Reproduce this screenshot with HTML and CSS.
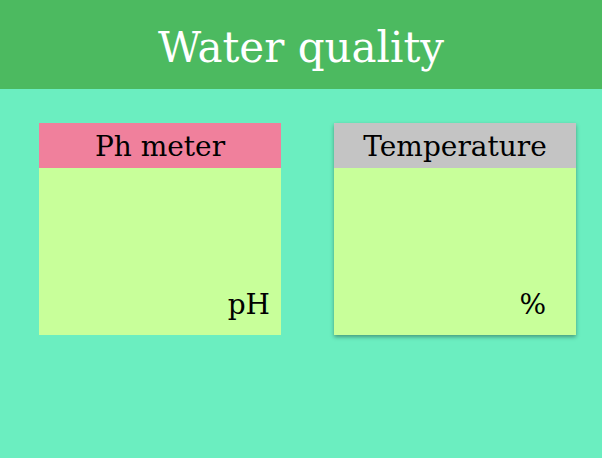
FILE: index.html
```html
<!DOCTYPE html>
<html lang="en">
<head>
    <meta charset="UTF-8">
    <title>Water quality</title>
    <link rel="stylesheet" href="styles.css">
</head>
<body>
<div class="header">Water quality</div>

<div class="panel">
    <div class="card">
        <div class="card-title ph">Ph meter</div>
        <div class="card-body">
            <span class="value"></span><span class="unit">pH</span>
        </div>
    </div>
    <div class="card raised">
        <div class="card-title temp">Temperature</div>
        <div class="card-body">
            <span class="value"></span><span class="unit unit-wide">%</span>
        </div>
    </div>
</div>
</body>
</html>
```

FILE: styles.css
```css
*{
    margin: 0;
    padding: 0;
    box-sizing: border-box;
}
body{
    width: 602px;
    height: 458px;
    background-color: #6beec0;
    font-family: "DejaVu Serif", serif;
    color: #000;
}
.header{
    height: 89px;
    padding-top: 24px;
    background-color: #4cba60;
    color: #fff;
    font-size: 42px;
    line-height: 48px;
    text-align: center;
}
.panel{
    display: flex;
    gap: 53px;
    padding: 34px 0 0 39px;
}
.card{
    width: 242px;
    height: 212px;
    display: flex;
    flex-direction: column;
    background-color: #c8ff9a;
}
.raised{
    box-shadow: 0 2px 4px rgba(0,0,0,0.35);
}
.card-title{
    height: 45px;
    padding-top: 2px;
    font-size: 28px;
    line-height: 43px;
    text-align: center;
}
.ph{
    background-color: #f0809c;
}
.temp{
    background-color: #c4c4c4;
}
.card-body{
    flex: 1;
    display: flex;
    justify-content: flex-end;
    align-items: flex-end;
    padding: 0 11px 14px 0;
    font-size: 28px;
}
.unit-wide{
    margin-right: 19px;
}
```
